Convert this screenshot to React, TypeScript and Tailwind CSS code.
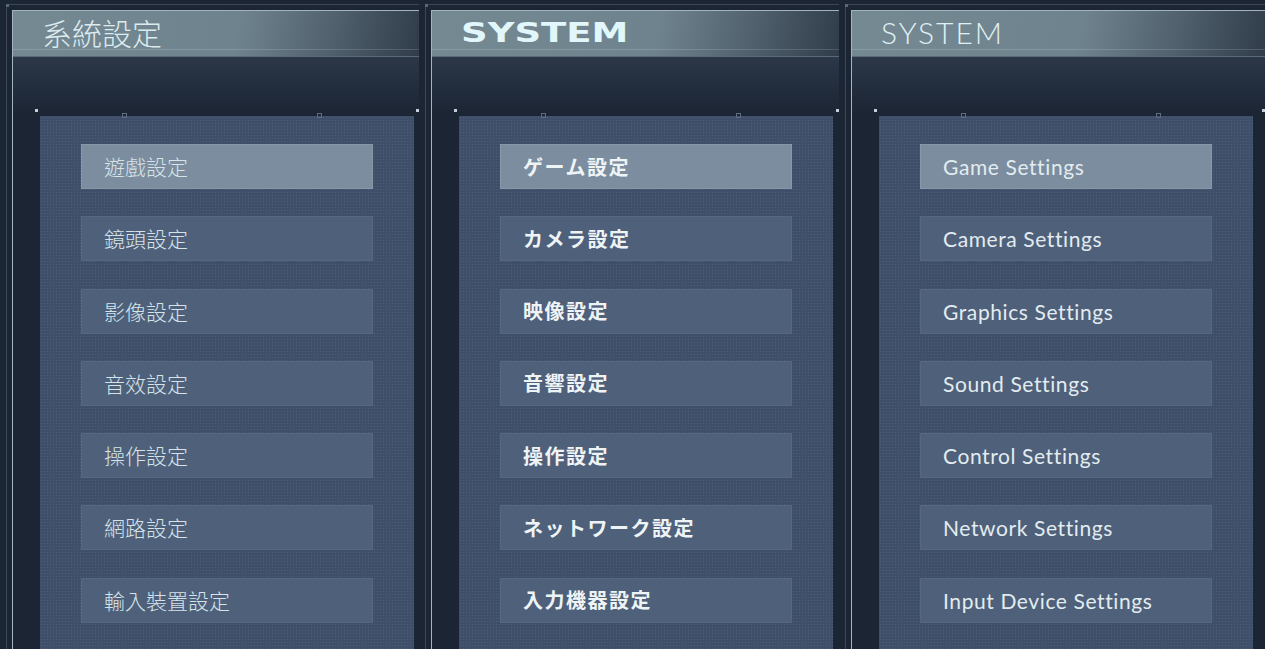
import React from 'react'

type Variant = 'tc' | 'jp' | 'en'

const panels: { variant: Variant; title: string; items: string[]; width: string }[] = [
  {
    variant: 'tc',
    title: '系統設定',
    items: ['遊戲設定', '鏡頭設定', '影像設定', '音效設定', '操作設定', '網路設定', '輸入裝置設定'],
    width: 'w-[419px]',
  },
  {
    variant: 'jp',
    title: 'SYSTEM',
    items: ['ゲーム設定', 'カメラ設定', '映像設定', '音響設定', '操作設定', 'ネットワーク設定', '入力機器設定'],
    width: 'w-[420px]',
  },
  {
    variant: 'en',
    title: 'SYSTEM',
    items: [
      'Game Settings',
      'Camera Settings',
      'Graphics Settings',
      'Sound Settings',
      'Control Settings',
      'Network Settings',
      'Input Device Settings',
    ],
    width: 'w-[426px]',
  },
]

function Title({ variant, text }: { variant: Variant; text: string }) {
  if (variant === 'tc') {
    return (
      <span className="text-[30px] leading-none text-[#dcebef] font-['Noto_Sans_CJK_TC',sans-serif] font-light">
        {text}
      </span>
    )
  }
  if (variant === 'jp') {
    return (
      <span className="inline-block origin-left scale-x-[1.37] text-[27px] leading-none font-bold text-[#e2f7fb] font-['DejaVu_Sans',sans-serif]">
        {text}
      </span>
    )
  }
  return (
    <span className="text-[30px] leading-none font-light tracking-[2px] text-[#e0f1f4] font-['Lato',sans-serif]">
      {text}
    </span>
  )
}

function itemText(variant: Variant) {
  if (variant === 'tc') return "text-[21px] font-light text-[#d6e3e9] font-['Noto_Sans_CJK_TC',sans-serif]"
  if (variant === 'jp') return "text-[20px] font-bold text-[#eef4f6] tracking-[1.5px] font-['Noto_Sans_CJK_JP',sans-serif]"
  return "text-[21px] tracking-[0.6px] text-[#e2ecf0] font-['Lato',sans-serif]"
}

function Panel({ variant, title, items, width }: (typeof panels)[number]) {
  return (
    <div className={`${width} h-[649px] bg-[#1c2533] pl-[6px] pt-[4px]`}>
      <div className="relative h-full border-l border-t border-[#3a4859] pl-[5px] pt-[5px]">
        <div className="absolute -left-[1px] -top-[1px] size-[3px] bg-[#56687a]" />
        <div className="flex h-full flex-col border-l border-t border-[#a4b4bf]">
          {/* header */}
          <div className="flex h-[46px] flex-col border-b border-[#5a6b78] bg-[linear-gradient(100deg,#758993_0%,#6f838e_55%,#51616e_78%,#303c49_100%)]">
            <div className="flex h-[39px] items-center border-b border-white/15 pl-[29px] pt-[4px]">
              <Title variant={variant} text={title} />
            </div>
          </div>

          {/* dark band */}
          <div className="relative h-[59px] bg-[linear-gradient(180deg,#2c3849_0%,#232e3e_45%,#1c2534_100%)]">
            <div className="absolute left-[22px] top-[52px] size-[3px] bg-[#c3ced6]" />
            <div className="absolute right-0 top-[52px] size-[3px] bg-[#c3ced6]" />
            <div className="absolute left-[109px] top-[56px] size-[5px] border border-[#5d6d84]" />
            <div className="absolute left-[304px] top-[56px] size-[5px] border border-[#5d6d84]" />
          </div>

          {/* menu */}
          <div className="ml-[27px] flex w-[374px] flex-1 flex-col gap-[27.3px] bg-[#3f4f6a] bg-[radial-gradient(circle,rgba(150,170,200,0.18)_0.7px,transparent_1px)] bg-[length:3px_3px] pl-[41px] pt-[28px]">
            {items.map((label, i) => (
              <div
                key={label}
                className={`flex h-[45px] w-[292px] items-center border pl-[22px] ${
                  i === 0
                    ? 'border-[#8798a8] bg-[#7b8d9e]'
                    : 'border-[#566781] bg-[#4f607a]'
                }`}
              >
                <span className={`${itemText(variant)} leading-none`}>{label}</span>
              </div>
            ))}
          </div>
        </div>
      </div>
    </div>
  )
}

export default function App() {
  return (
    <div className="flex h-[649px] w-[1265px] overflow-hidden bg-[#1c2533]">
      {panels.map(p => (
        <Panel key={p.width} {...p} />
      ))}
    </div>
  )
}
